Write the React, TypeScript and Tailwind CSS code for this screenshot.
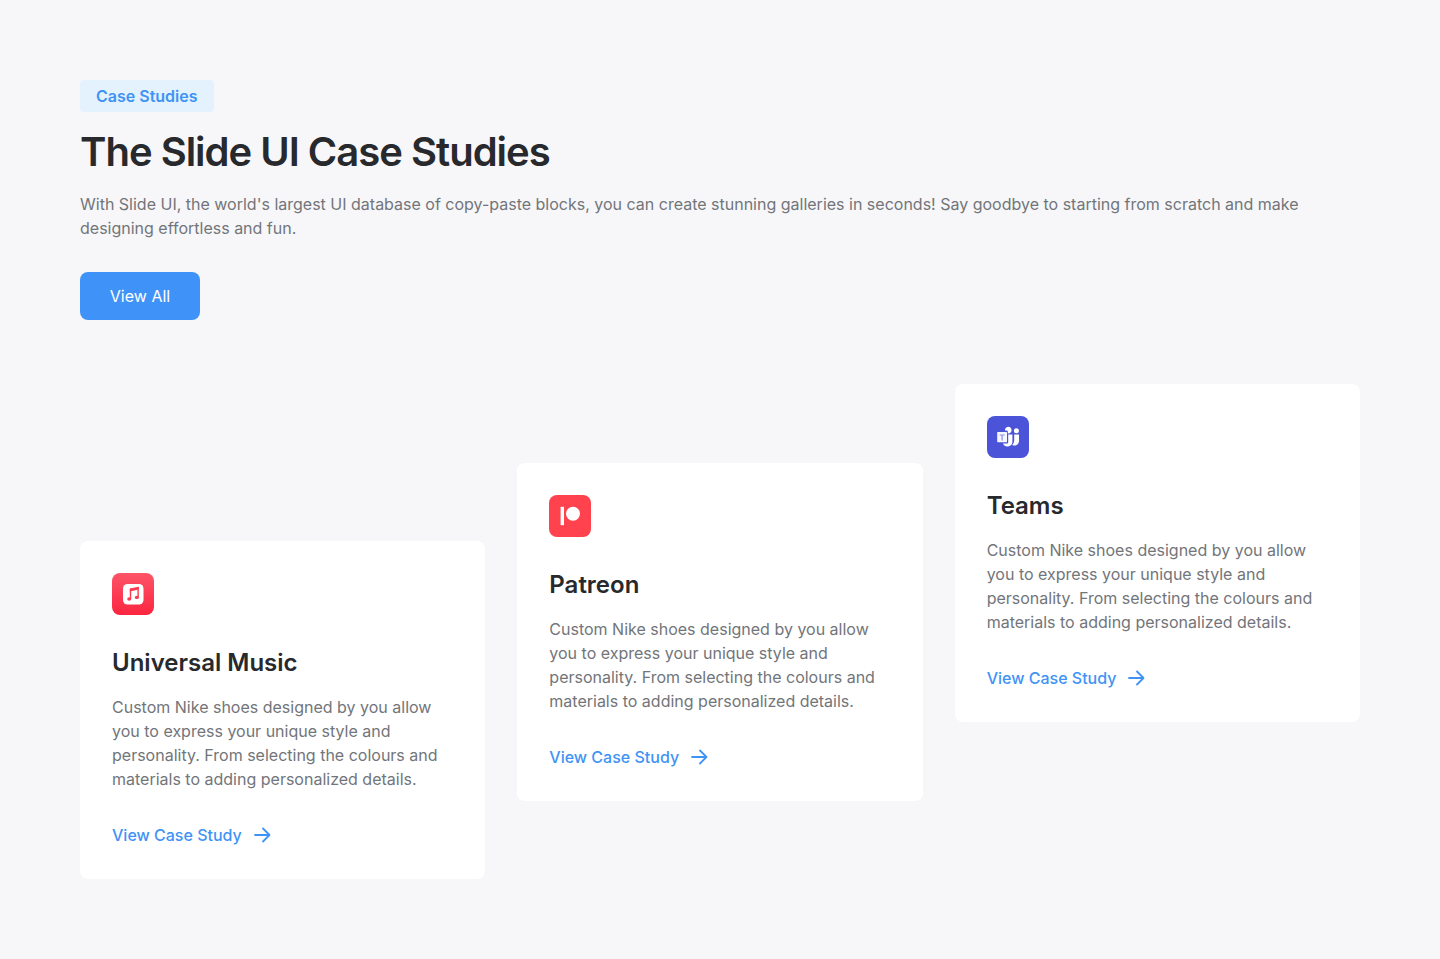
import type { ReactNode } from "react";

function MusicLogo() {
  return (
    <svg viewBox="0 0 42 42" className="size-[42px]" aria-hidden="true">
      <defs>
        <linearGradient id="music-bg" x1="0" y1="0" x2="0" y2="1">
          <stop offset="0" stopColor="#fd5468" />
          <stop offset="1" stopColor="#fb2540" />
        </linearGradient>
      </defs>
      <rect width="42" height="42" rx="8" fill="url(#music-bg)" />
      <rect x="11" y="11" width="20.5" height="20.5" rx="4.5" fill="#fff" />
      <g fill="#fb3a50">
        <path d="M17.8 15.600l9-1.900v2.800l-9 1.900z" />
        <path d="M17.800 15.700h1.400v10.300h-1.400zM25.400 14h1.400v10.400h-1.400z" />
        <ellipse cx="17.200" cy="26" rx="2" ry="1.700" />
        <ellipse cx="24.800" cy="24.400" rx="2" ry="1.700" />
      </g>
    </svg>
  );
}

function PatreonLogo() {
  return (
    <svg viewBox="0 0 42 42" className="size-[42px]" aria-hidden="true">
      <rect width="42" height="42" rx="8" fill="#ff424d" />
      <rect x="11.6" y="11.8" width="3.4" height="18.4" fill="#fff" />
      <circle cx="24" cy="18.8" r="7" fill="#fff" />
    </svg>
  );
}

function TeamsLogo() {
  return (
    <svg viewBox="0 0 42 42" className="size-[42px]" aria-hidden="true">
      <rect width="42" height="42" rx="8" fill="#4b53d8" />
      <g fill="#fff">
        <path d="M18 14.500a3.300 3.300 0 1 1 5.400 2.200 3.300 3.300 0 0 1-2.600.7v-1.900a1 1 0 0 0-1-1z" />
        <circle cx="29.400" cy="14.800" r="2.500" />
        <path d="M21.200 18.500h4.200v6.700a5 5 0 0 1-9.200 3v-.8h4a1 1 0 0 0 1-1z" />
        <path d="M27.200 18.500h4.800v6.500a4.600 4.600 0 0 1-6.800 4 7 7 0 0 0 2-4.600z" />
      </g>
      <rect x="10.200" y="16" width="9.800" height="10.200" rx="0.600" fill="#f6f6ff" />
      <path d="M12.600 18.500h5v1.100h-1.900v5h-1.200v-5h-1.900z" fill="#8b90e8" />
    </svg>
  );
}

function ArrowIcon() {
  return (
    <svg
      viewBox="0 0 24 24"
      className="size-6"
      fill="none"
      stroke="currentColor"
      strokeWidth="1.800"
      strokeLinecap="round"
      strokeLinejoin="round"
      aria-hidden="true"
    >
      <path d="M5 12h14.500M13 5.500l6.500 6.500-6.500 6.500" />
    </svg>
  );
}

type CaseStudy = { name: string; logo: ReactNode; offset: string };

const description =
  "Custom Nike shoes designed by you allow you to express your unique style and personality. From selecting the colours and materials to adding personalized details.";

const studies: CaseStudy[] = [
  { name: "Universal Music", logo: <MusicLogo />, offset: "md:mt-[157px]" },
  { name: "Patreon", logo: <PatreonLogo />, offset: "md:mt-[79px]" },
  { name: "Teams", logo: <TeamsLogo />, offset: "" },
];

function CaseStudyCard({ name, logo, offset }: CaseStudy) {
  return (
    <article className={`rounded-lg bg-white p-8 ${offset}`}>
      {logo}
      <h2 className="mt-8 text-2xl font-semibold text-[#27292d]">{name}</h2>
      <p className="mt-4 text-base text-[#72757a]">{description}</p>
      <a href="#" className="mt-8 inline-flex items-center gap-2 align-top font-medium text-[#3f93f5]">
        View Case Study
        <ArrowIcon />
      </a>
    </article>
  );
}

export default function App() {
  return (
    <main className="min-h-screen bg-[#f7f7f9] p-20 font-['Inter',sans-serif]">
      <header className="flex flex-col items-start">
        <span className="rounded-sm bg-[#e4f2fe] px-4 py-1 font-semibold text-[#3f93f5]">Case Studies</span>
        <h1 className="mt-4 text-[40px] leading-12 font-semibold tracking-tight text-[#27292d]">
          The Slide UI Case Studies
        </h1>
        <p className="mt-4 text-base text-[#72757a]">
          With Slide UI, the world's largest UI database of copy-paste blocks, you can create stunning galleries in
          seconds! Say goodbye to starting from scratch and make designing effortless and fun.
        </p>
        <button type="button" className="mt-8 h-12 w-30 rounded-lg bg-[#3f93f8] text-white">
          View All
        </button>
      </header>
      <section className="mt-16 grid items-start gap-8 md:grid-cols-3">
        {studies.map((study) => (
          <CaseStudyCard key={study.name} {...study} />
        ))}
      </section>
    </main>
  );
}
